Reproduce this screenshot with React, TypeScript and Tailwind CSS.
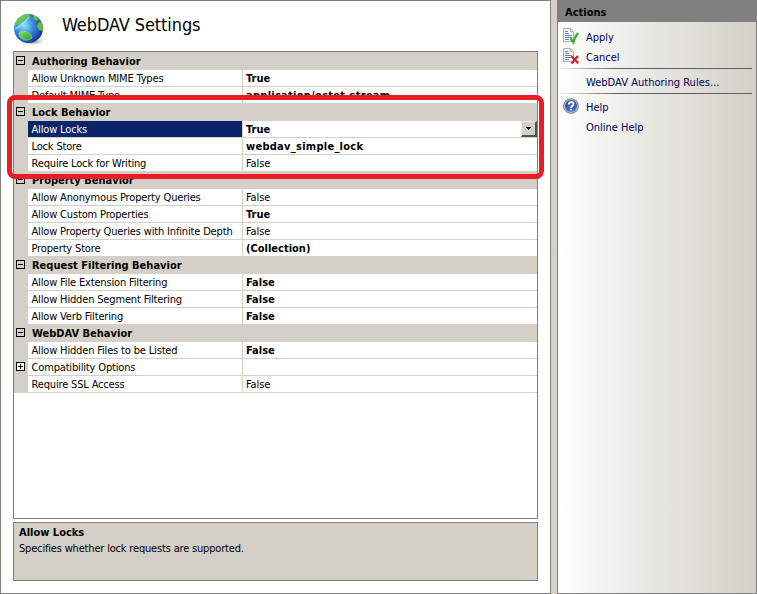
type Row = { name: string; value: string; bold?: boolean; selected?: boolean; expandable?: boolean; wide?: boolean };
type Group = { title: string; rows: Row[] };

const groups: Group[] = [
  {
    title: 'Authoring Behavior',
    rows: [
      { name: 'Allow Unknown MIME Types', value: 'True', bold: true },
      { name: 'Default MIME Type', value: 'application/octet-stream', bold: true, wide: true },
    ],
  },
  {
    title: 'Lock Behavior',
    rows: [
      { name: 'Allow Locks', value: 'True', bold: true, selected: true },
      { name: 'Lock Store', value: 'webdav_simple_lock', bold: true, wide: true },
      { name: 'Require Lock for Writing', value: 'False' },
    ],
  },
  {
    title: 'Property Behavior',
    rows: [
      { name: 'Allow Anonymous Property Queries', value: 'False' },
      { name: 'Allow Custom Properties', value: 'True', bold: true },
      { name: 'Allow Property Queries with Infinite Depth', value: 'False' },
      { name: 'Property Store', value: '(Collection)', bold: true },
    ],
  },
  {
    title: 'Request Filtering Behavior',
    rows: [
      { name: 'Allow File Extension Filtering', value: 'False', bold: true },
      { name: 'Allow Hidden Segment Filtering', value: 'False', bold: true },
      { name: 'Allow Verb Filtering', value: 'False', bold: true },
    ],
  },
  {
    title: 'WebDAV Behavior',
    rows: [
      { name: 'Allow Hidden Files to be Listed', value: 'False', bold: true },
      { name: 'Compatibility Options', value: '', expandable: true },
      { name: 'Require SSL Access', value: 'False' },
    ],
  },
];

function Toggle({ plus }: { plus?: boolean }) {
  return (
    <svg className="mt-[3px] ml-[2px] block shrink-0" width="9" height="9" shapeRendering="crispEdges">
      <rect x="0.5" y="0.5" width="8" height="8" fill={plus ? '#fff' : 'none'} stroke="#000" />
      <path d={plus ? 'M2 4.5H7M4.5 2V7' : 'M2 4.5H7'} stroke="#000" />
    </svg>
  );
}

function Globe() {
  return (
    <svg width="34" height="34" viewBox="0 0 34 34" className="block">
      <defs>
        <radialGradient id="sea" cx="0.36" cy="0.4" r="0.68">
          <stop offset="0" stopColor="#8fe0fa" />
          <stop offset="0.4" stopColor="#3f97e0" />
          <stop offset="0.8" stopColor="#1f54b0" />
          <stop offset="1" stopColor="#123078" />
        </radialGradient>
        <radialGradient id="shade">
          <stop offset="0" stopColor="#555" stopOpacity="0.7" />
          <stop offset="1" stopColor="#555" stopOpacity="0" />
        </radialGradient>
        <linearGradient id="land" x1="0" y1="0" x2="1" y2="1">
          <stop offset="0" stopColor="#8ee25c" />
          <stop offset="1" stopColor="#229c35" />
        </linearGradient>
        <clipPath id="ball"><circle cx="15.5" cy="15.5" r="14.5" /></clipPath>
      </defs>
      <ellipse cx="19" cy="28.5" rx="12" ry="3.5" fill="url(#shade)" />
      <circle cx="15.5" cy="15.5" r="14.5" fill="url(#sea)" />
      <g clipPath="url(#ball)">
        <path d="M2 12C3 6 8 1 15 1L18 3L16 5L14 4L12 7L9 8L7 11L4 11L1 16Z" fill="url(#land)" />
        <path d="M19 1L25 3L28 8L25 7L23 8L20 6L21 4Z" fill="url(#land)" />
        <path d="M30 10L26 9L24 13L26 17L30 18Z" fill="#6fbd2c" />
        <path d="M6 20L9 18L14 19L18 22L19 25L15 27L11 27L7 24Z" fill="url(#land)" stroke="#bdf0a0" strokeWidth="0.5" />
        <path d="M2 16Q9 13 16 4" stroke="#c9f6ff" strokeOpacity="0.5" strokeWidth="2" fill="none" />
      </g>
    </svg>
  );
}

function Sheet({ ok }: { ok?: boolean }) {
  return (
    <svg width="17" height="17" viewBox="0 0 17 17" className="block">
      <path d="M0.5 0.5H7.5L10.5 3.5V13.5H0.5Z" fill="#fbfcfd" stroke="#a9adb1" />
      <path d="M7.5 0.5V3.5H10.5" fill="#e4e7ea" stroke="#a9adb1" />
      <path d="M2 3.5H5M2 5.5H6M2 7.5H9M2 9.5H9M2 11.5H6" stroke="#5d83b4" />
      {ok ? (
        <path d="M7.6 10.5L10.4 14.2C11.2 10.8 12.6 8 15 5" fill="none" stroke="#39b11e" strokeWidth="2.3" />
      ) : (
        <path d="M8.5 8.3L15.3 15.2M15 8L8.5 15.5" fill="none" stroke="#cf2020" strokeWidth="2.2" />
      )}
    </svg>
  );
}

function HelpIcon() {
  return (
    <svg width="17" height="17" viewBox="0 0 17 17" className="block">
      <defs>
        <linearGradient id="help" x1="0" y1="0" x2="0" y2="1">
          <stop offset="0" stopColor="#2c4c9e" />
          <stop offset="1" stopColor="#4577d0" />
        </linearGradient>
      </defs>
      <circle cx="8" cy="8" r="7.3" fill="#d0d3d8" stroke="#7c828c" strokeWidth="1.1" />
      <circle cx="8" cy="8" r="6.1" fill="url(#help)" />
      <path d="M5.7 6.6C5.7 3.2 10.5 3.3 10.5 6.1C10.5 7.8 8.1 7.8 8.1 9.9" fill="none" stroke="#fff" strokeWidth="1.8" />
      <rect x="7.2" y="10.8" width="1.8" height="1.8" fill="#fff" />
    </svg>
  );
}

function Group({ group }: { group: Group }) {
  return (
    <section>
      <div className="flex h-[17px] bg-[#d4d0c8]">
        <div className="w-[18px] shrink-0"><Toggle /></div>
        <h2 className="text-[11px] leading-[17px] font-bold whitespace-nowrap">{group.title}</h2>
      </div>
      {group.rows.map((row) => (
        <div key={row.name} className="flex h-[17px]">
          <div className="w-[14px] shrink-0 bg-[#d4d0c8]">{row.expandable && <Toggle plus />}</div>
          <div className={`w-[214px] shrink-0 border-b border-[#d4d0c8] pl-[3.5px] ${row.selected ? 'bg-[#0a246a] text-white' : ''}`}>
            <div className="leading-[18px] tracking-[-0.16px] whitespace-nowrap">{row.name}</div>
          </div>
          <div className="flex h-[17px] min-w-0 grow justify-between border-b border-l border-[#d4d0c8] pl-[3px]">
            <div className={`leading-[18px] whitespace-nowrap ${row.bold ? 'font-bold' : 'tracking-[-0.1px]'} ${row.wide ? 'tracking-[0.27px]' : ''}`}>{row.value}</div>
            {row.selected && (
              <div className="flex h-[16px] w-[16px] items-center justify-center border-t border-r-2 border-b-2 border-l border-t-[#eeece8] border-r-[#55534f] border-b-[#55534f] border-l-[#eeece8] bg-[#d4d0c8]">
                <svg width="5" height="3" shapeRendering="crispEdges"><path d="M0 0H5L2.5 3Z" /></svg>
              </div>
            )}
          </div>
        </div>
      ))}
    </section>
  );
}

export default function App() {
  return (
    <div className="relative flex h-[594px] w-[757px] overflow-hidden bg-[#d4d0c8] font-['DejaVu_Sans_Condensed','DejaVu_Sans',sans-serif] text-[11px] text-black [font-stretch:condensed]">
      <main className="flex w-[551px] shrink-0 flex-col border border-[#808080] bg-white pl-[12px]">
        <header className="flex h-[50px]">
          <div className="mt-[12px] w-[49px]"><Globe /></div>
          <h1 className="mt-[9px] text-[18px] leading-[30px] tracking-[-0.1px] whitespace-nowrap">WebDAV Settings</h1>
        </header>
        <div className="h-[468px] w-[525px] border border-[#808080]">
          <div className="h-px bg-[#d4d0c8]" />
          {groups.map((g) => <Group key={g.title} group={g} />)}
        </div>
        <footer className="mt-[3px] h-[59px] w-[525px] border border-[#808080] bg-[#d4d0c8] pt-px pl-[5px]">
          <h3 className="leading-[17px] font-bold">Allow Locks</h3>
          <p className="leading-[15px] tracking-[-0.18px]">Specifies whether lock requests are supported.</p>
        </footer>
      </main>
      <aside className="ml-[6px] flex w-[200px] shrink-0 flex-col border-x border-b border-[#808080] bg-linear-to-r from-white via-[#e6e6e0] via-50% to-[#d4d0c8] text-[#000057]">
        <h2 className="h-[22px] bg-[#808080] pl-[7px] leading-[25px] font-bold text-black">Actions</h2>
        <nav className="flex flex-col">
          <div className="mt-[6px] flex h-[20px] pl-[5px] leading-[20px]"><div className="w-[23px]"><Sheet ok /></div>Apply</div>
          <div className="flex h-[20px] pl-[5px] leading-[20px]"><div className="w-[23px]"><Sheet /></div>Cancel</div>
          <div className="mr-[4px] ml-[2px] h-px bg-linear-to-r from-[#60606010] via-[#606060] via-30% to-[#606060]" />
          <div className="h-[24px] pl-[28px] leading-[27px] tracking-[0.03px]">WebDAV Authoring Rules...</div>
          <div className="mr-[4px] ml-[2px] h-px bg-linear-to-r from-[#60606010] via-[#606060] via-30% to-[#606060]" />
          <div className="mt-[4px] flex h-[20px] pl-[5px] leading-[20px]"><div className="w-[23px]"><HelpIcon /></div>Help</div>
          <div className="h-[20px] pl-[28px] leading-[20px]">Online Help</div>
        </nav>
      </aside>
      <div className="absolute top-[95px] left-[7px] h-[84px] w-[537px] rounded-[8px] border-5 border-[#ec1c24]">
        <div className="ml-[16px] flex h-[3px] w-[509px] bg-white"><div className="ml-[214px] w-px bg-[#d4d0c8]" /></div>
      </div>
    </div>
  );
}
